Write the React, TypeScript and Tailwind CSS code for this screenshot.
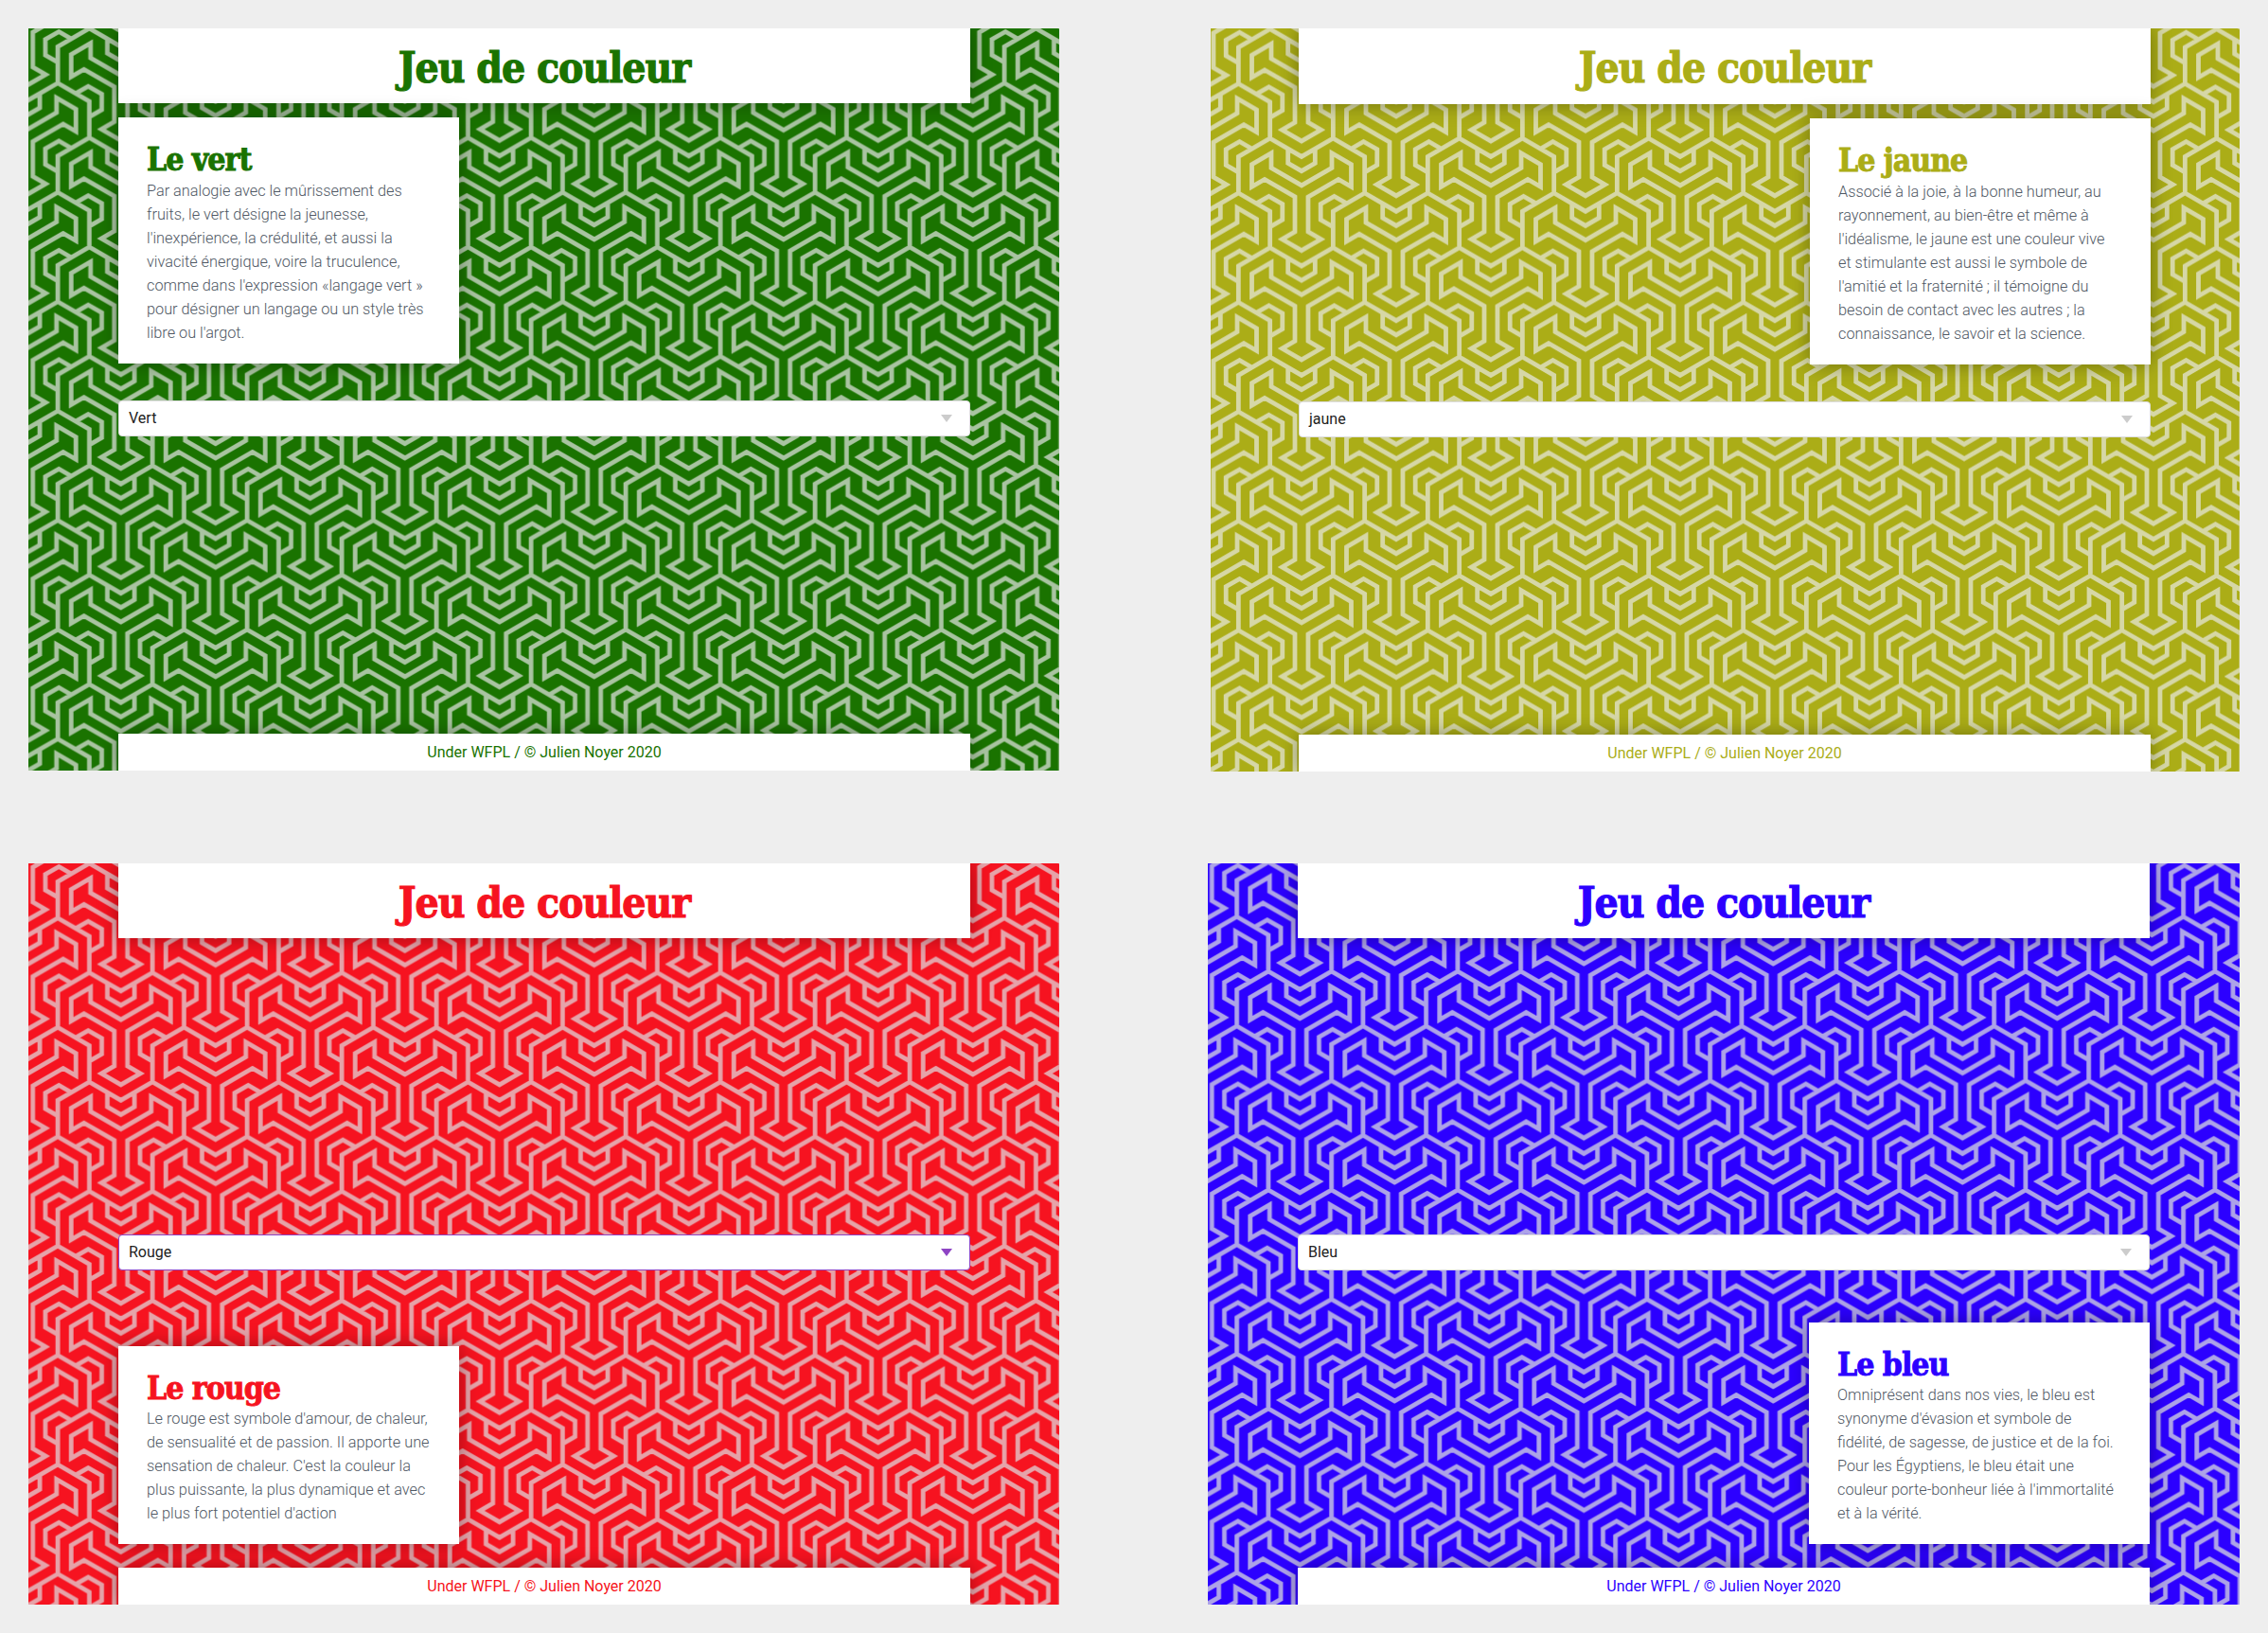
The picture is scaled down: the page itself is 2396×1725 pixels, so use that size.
const panels = [
    {
        id: 'vert',
        name: 'Vert',
        title: 'Le vert',
        text: "Par analogie avec le mûrissement des fruits, le vert désigne la jeunesse, l'inexpérience, la crédulité, et aussi la vivacité énergique, voire la truculence, comme dans l'expression «langage vert » pour désigner un langage ou un style très libre ou l'argot.",
        bg: '#1a7300',
        line: '#a9c4a1',
        ink: 'text-[#1a7300]',
        x: -2.3,
        y: 0,
        box: 'w-[1089px] h-[784px] pl-[95px] pr-[94px]',
        head: 'h-[79px]',
        gap: 'h-[314px]',
        top: true,
        right: false,
        focus: false,
    },
    {
        id: 'jaune',
        name: 'jaune',
        title: 'Le jaune',
        text: "Associé à la joie, à la bonne humeur, au rayonnement, au bien-être et même à l'idéalisme, le jaune est une couleur vive et\u00a0stimulante est aussi le symbole de l'amitié\u00a0et la fraternité ; il témoigne du besoin\u00a0de contact avec les autres ; la connaissance, le savoir et la science.",
        bg: '#abad17',
        line: '#d6d7a6',
        ink: 'text-[#abad17]',
        x: -4,
        y: 0.7,
        box: 'w-[1087px] h-[785px] pl-[93px] pr-[94px]',
        head: 'h-[80px]',
        gap: 'h-[314px]',
        top: true,
        right: true,
        focus: false,
    },
    {
        id: 'rouge',
        name: 'Rouge',
        title: 'Le rouge',
        text: "Le rouge est symbole d'amour, de chaleur, de sensualité et de passion. Il apporte une sensation de chaleur. C'est la couleur la plus puissante, la plus dynamique et avec le plus fort potentiel d'action",
        bg: '#f61320',
        line: '#e6a3a9',
        ink: 'text-[#f61320]',
        x: -2.3,
        y: 0,
        box: 'w-[1089px] h-[783px] pl-[95px] pr-[94px]',
        head: 'h-[79px]',
        gap: 'h-[313px]',
        top: false,
        right: false,
        focus: true,
    },
    {
        id: 'bleu',
        name: 'Bleu',
        title: 'Le bleu',
        text: "Omniprésent dans nos vies, le bleu est synonyme d'évasion et symbole de fidélité, de sagesse, de justice et de la foi. Pour les Égyptiens, le bleu était une couleur porte-bonheur liée à l'immortalité et à la vérité.",
        bg: '#2c00ff',
        line: '#ada3e8',
        ink: 'text-[#2c00ff]',
        x: -2.7,
        y: -1.4,
        box: 'w-[1090px] h-[783px] pl-[95px] pr-[95px]',
        head: 'h-[79px]',
        gap: 'h-[313px]',
        top: false,
        right: true,
        focus: false,
    },
];

const TILE_W = 200;
const TILE_H = 115.47;

function rotate(p: number[], k: number) {
    const a = (-120 * k * Math.PI) / 180;
    return [p[0] * Math.cos(a) - p[1] * Math.sin(a), p[0] * Math.sin(a) + p[1] * Math.cos(a)];
}

function toPath(points: number[][], hx: number, hy: number, close = false) {
    const d = points.map((p, i) => `${i === 0 ? 'M' : 'L'}${(p[0] + hx).toFixed(2)} ${(p[1] + hy).toFixed(2)}`).join('');
    return close ? d + 'Z' : d;
}

// one hub of the maze: star outline, three small chevrons, bent honeycomb
function hubPath(hx: number, hy: number) {
    const arm = [[-7, 4], [-7, 41], [-20.5, 48.8], [0, 60.6], [20.5, 48.8], [7, 41]];
    const chevron = [[-14.3, -45.6], [-14.3, -31.6], [0, -23.3], [14.3, -31.6], [14.3, -45.6]];
    let d = '';
    const star: number[][] = [];
    for (let k = 0; k < 3; k++) {
        arm.forEach((p) => star.push(rotate(p, k)));
        d += toPath(chevron.map((p) => rotate(p, k)), hx, hy);
    }
    d += toPath(star, hx, hy, true);
    const ax = -33.33;
    const ay = 57.74;
    d += toPath([[ax, ay], [ax, ay - 38.49], [ax - 33.33, ay - 57.74]], hx, hy);
    d += toPath([[ax, ay], [ax + 33.33, ay + 19.25], [ax + 66.67, ay]], hx, hy);
    d += toPath([[ax, ay], [ax - 33.33, ay + 19.25], [ax - 33.33, ay + 57.74]], hx, hy);
    return d;
}

function tilePath() {
    let d = '';
    for (let i = -1; i <= 1; i++) {
        for (let j = -1; j <= 1; j++) {
            d += hubPath(i * TILE_W, j * TILE_H);
            d += hubPath(i * TILE_W + TILE_W / 2, j * TILE_H + TILE_H / 2);
        }
    }
    return d;
}

const TILE = tilePath();

function Maze({ id, bg, line, x, y }: { id: string; bg: string; line: string; x: number; y: number }) {
    return (
        <svg className="absolute inset-0 h-full w-full" aria-hidden="true">
            <defs>
                <pattern id={`maze-${id}`} width={TILE_W} height={TILE_H} patternUnits="userSpaceOnUse" patternTransform={`translate(${x} ${y})`}>
                    <rect width={TILE_W} height={TILE_H} fill={bg} />
                    <path d={TILE} fill="none" stroke={line} strokeWidth="4.8" strokeLinejoin="miter" />
                </pattern>
            </defs>
            <rect width="100%" height="100%" fill={`url(#maze-${id})`} />
        </svg>
    );
}

function Card({ p }: { p: (typeof panels)[number] }) {
    return (
        <div className="w-[360px] bg-white px-[30px] py-5 shadow-[0_0_20px_rgba(0,0,0,0.35)]">
            <h2 className={`h-[44.5px] font-['DejaVu_Serif_Condensed','DejaVu_Serif',serif] text-[33.5px] leading-[49px] font-bold tracking-[-1px] [-webkit-text-stroke:0.9px_currentColor] ${p.ink}`}>{p.title}</h2>
            <p className="font-['Roboto',sans-serif] text-[16.3px] leading-[25px] font-light text-[#4f5864]">{p.text}</p>
        </div>
    );
}

function Panel({ p }: { p: (typeof panels)[number] }) {
    return (
        <section className={`relative flex flex-col overflow-hidden ${p.box}`}>
            <Maze id={p.id} bg={p.bg} line={p.line} x={p.x} y={p.y} />
            <header className={`relative flex items-center justify-center bg-white pt-[4px] shadow-[0_0_20px_rgba(0,0,0,0.35)] ${p.head}`}>
                <h1 className={`font-['DejaVu_Serif_Condensed','DejaVu_Serif',serif] text-[44px] font-bold tracking-[-1px] [-webkit-text-stroke:1.1px_currentColor] ${p.ink}`}>Jeu de couleur</h1>
            </header>
            <div className={`relative flex shrink-0 items-start pt-[15px] ${p.gap} ${p.right ? 'justify-end' : 'justify-start'}`}>{p.top && <Card p={p} />}</div>
            <div
                className={`relative flex h-[38px] shrink-0 items-center justify-between rounded-[4px] border bg-white pr-[18px] pl-[10px] font-['Roboto',sans-serif] text-[16px] text-[#222] ${
                    p.focus ? 'border-[#8e44c4]' : 'border-[#dddddd]'
                }`}
            >
                <span>{p.name}</span>
                <svg width="12" height="8" viewBox="0 0 12 8" aria-hidden="true">
                    <path d="M0 0H12L6 8Z" fill={p.focus ? '#8e44c4' : '#cccccc'} />
                </svg>
            </div>
            <div className={`relative flex min-h-0 flex-1 items-end pb-[25px] ${p.right ? 'justify-end' : 'justify-start'}`}>{!p.top && <Card p={p} />}</div>
            <footer className={`relative flex h-[39px] shrink-0 items-center justify-center bg-white font-['Roboto',sans-serif] text-[16px] font-normal shadow-[0_0_20px_rgba(0,0,0,0.35)] ${p.ink}`}>
                Under WFPL / © Julien Noyer 2020
            </footer>
        </section>
    );
}

export default function App() {
    return (
        <div className="flex h-[1725px] w-[2396px] flex-col gap-y-[97px] overflow-hidden bg-[#eeeeee] pt-[30px]">
            <div className="flex items-start justify-between pr-[30px] pl-[30px]">
                <Panel p={panels[0]} />
                <Panel p={panels[1]} />
            </div>
            <div className="flex items-start justify-between pr-[30px] pl-[30px]">
                <Panel p={panels[2]} />
                <Panel p={panels[3]} />
            </div>
        </div>
    );
}
